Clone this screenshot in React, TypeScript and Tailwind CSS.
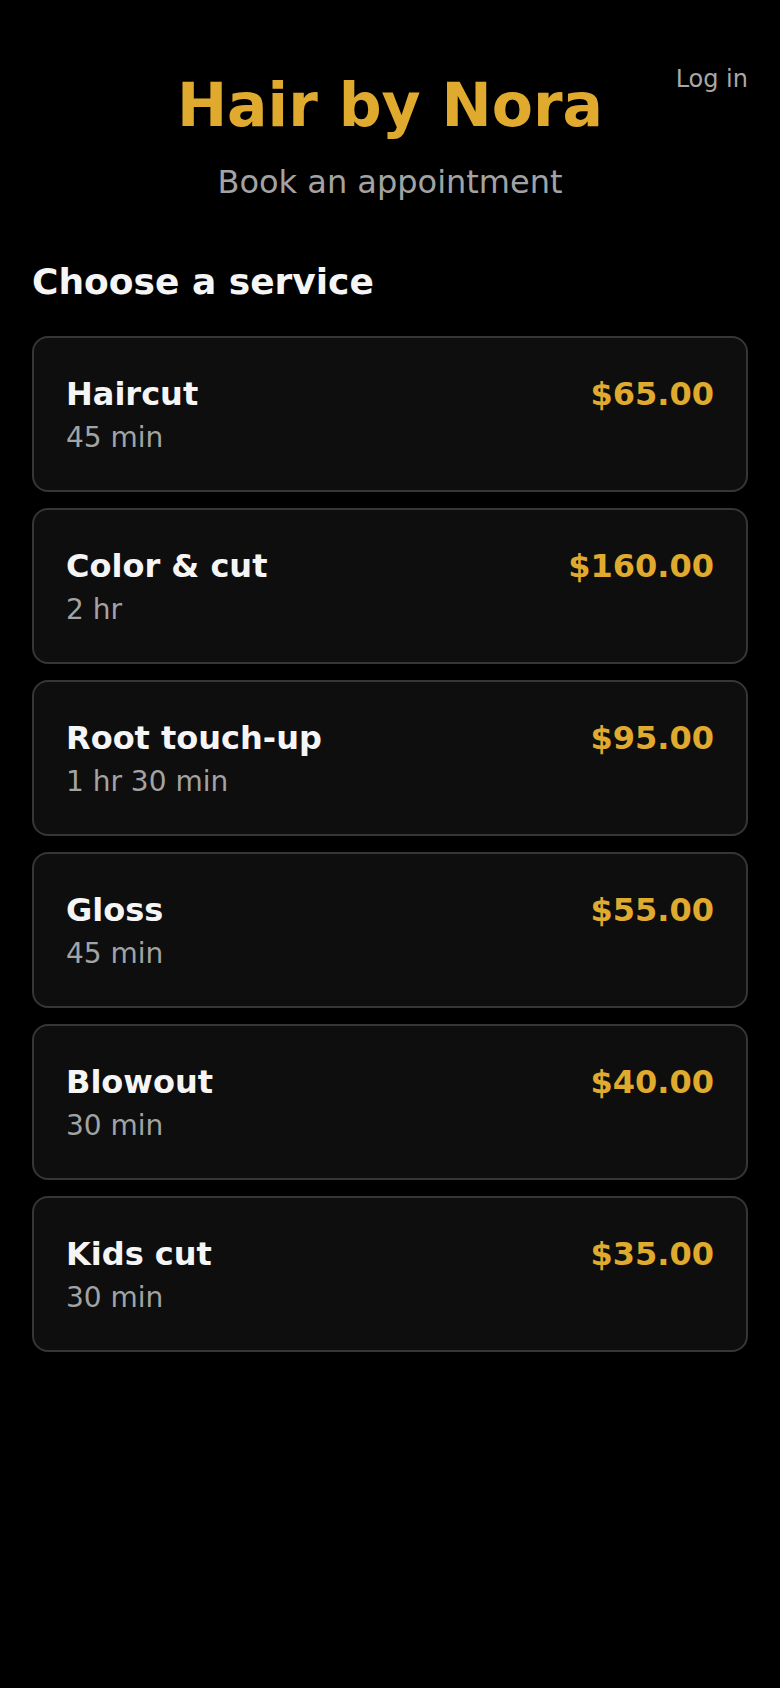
const services = [
  { name: 'Haircut', duration: '45 min', price: '$65.00' },
  { name: 'Color & cut', duration: '2 hr', price: '$160.00' },
  { name: 'Root touch-up', duration: '1 hr 30 min', price: '$95.00' },
  { name: 'Gloss', duration: '45 min', price: '$55.00' },
  { name: 'Blowout', duration: '30 min', price: '$40.00' },
  { name: 'Kids cut', duration: '30 min', price: '$35.00' },
]

function ServiceCard({ name, duration, price }: { name: string; duration: string; price: string }) {
  return (
    <button className="flex w-full items-start justify-between rounded-2xl border-2 border-[#363636] bg-[#0e0e0e] p-[32px] text-left">
      <div className="flex flex-col">
        <span className="text-[32px] leading-[48px] font-bold text-[#f5f5f5]">{name}</span>
        <span className="text-[28px] leading-[40px] text-[#a3a3a3]">{duration}</span>
      </div>
      <span className="text-[32px] leading-[48px] font-bold text-[#e0aa2e]">{price}</span>
    </button>
  )
}

export default function App() {
  return (
    <div className="min-h-[1688px] bg-black px-[32px] font-['DejaVu_Sans',sans-serif]">
      <header className="relative pt-[69px] text-center">
        <a href="#" className="absolute right-0 top-[63px] text-[24px] leading-[32px] text-[#a8a8a8]">
          Log in
        </a>
        <h1 className="text-[60px] leading-[72px] font-bold text-[#e0aa2e]">Hair by Nora</h1>
        <p className="mt-[17px] text-[32px] leading-[48px] text-[#a3a3a3]">Book an appointment</p>
      </header>

      <main className="mt-[48px]">
        <h2 className="text-[36px] leading-[56px] font-bold text-[#f5f5f5]">Choose a service</h2>
        <div className="mt-[26px] flex flex-col gap-[16px]">
          {services.map((s) => (
            <ServiceCard key={s.name} {...s} />
          ))}
        </div>
      </main>
    </div>
  )
}
